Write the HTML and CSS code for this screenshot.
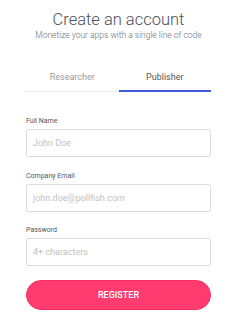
FILE: index.html
```html
<!DOCTYPE html>
<html lang="en">
    <head>
        <meta charset="utf-8">
        <meta name="viewport" content="width=device-width, initial-scale=1" />
        <title>Create an account</title>
        <link rel="stylesheet" href="styles.css">
    </head>
    <body>
        <div class="signup" role="main">
            <h1>Create an account</h1>
            <p class="lead">Monetize your apps with a single line of code</p>
            <div class="tabs">
                <div class="tab">Researcher</div>
                <div class="tab active">Publisher</div>
            </div>
            <form class="form">
                <label class="field">
                    <span>Full Name</span>
                    <input placeholder="John Doe">
                </label>
                <label class="field">
                    <span>Company Email</span>
                    <input placeholder="john.doe@pollfish.com">
                </label>
                <label class="field">
                    <span>Password</span>
                    <input type="password" placeholder="4+ characters">
                </label>
                <button type="button">REGISTER</button>
            </form>
        </div>
    </body>
</html>
```
FILE: styles.css
```css
body {
    margin: 0;
    background: #fff;
    font-family: Roboto, "Liberation Sans", sans-serif;
    color: #444;
}
.signup {
    width: 185px;
    margin-left: 26px;
}
h1 {
    margin: 10px 0 0;
    font-size: 16.5px;
    line-height: 19px;
    font-weight: 300;
    color: #4a4f5a;
    text-align: center;
}
.lead {
    margin: 0;
    font-size: 8.5px;
    line-height: 12px;
    font-weight: 300;
    color: #6b6f78;
    text-align: center;
}
.tabs {
    display: flex;
    margin-top: 30px;
}
.tab {
    flex: 1;
    font-size: 9px;
    line-height: 12px;
    text-align: center;
    color: #9a9a9a;
    padding-bottom: 8px;
    border-bottom: 1px solid #eceef2;
}
.tab.active {
    color: #555;
    padding-bottom: 7px;
    border-bottom: 2px solid #3f5ee0;
}
.form {
    display: flex;
    flex-direction: column;
    margin-top: 25px;
}
.field {
    display: flex;
    flex-direction: column;
    gap: 3px;
}
.field + .field { margin-top: 14.5px; }
.field span {
    font-size: 7px;
    line-height: 9px;
    color: #555;
}
.field input {
    box-sizing: border-box;
    height: 28px;
    margin: 0;
    padding: 0 6px;
    border: 1px solid #dcdcdc;
    border-radius: 2px;
    font: inherit;
    font-size: 9px;
    color: #444;
    outline: none;
}
.field input::placeholder { color: #c2c2c2; }
button {
    margin-top: 14px;
    height: 30px;
    border: 1px solid #f42d62;
    border-radius: 15px;
    background: #ff3b6f;
    color: #fff;
    font-family: inherit;
    font-size: 9px;
    font-weight: 500;
}
```
